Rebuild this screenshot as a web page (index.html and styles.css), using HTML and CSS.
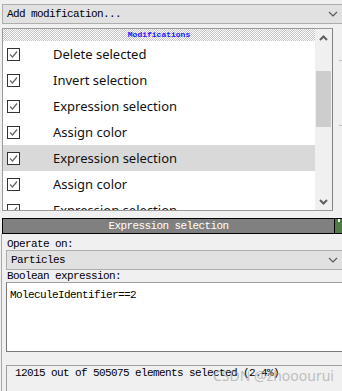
FILE: index.html
```html
<!DOCTYPE html>
<html lang="en">
<head>
    <meta charset="UTF-8">
    <title>Modifications</title>
    <link rel="stylesheet" href="styles.css">
</head>
<body>
    <div class="combo top-combo">
        <span>Add modification...</span>
        <svg class="chev" width="10" height="6" viewBox="0 0 10 6"><polyline points="1,1 5,5 9,1" fill="none" stroke="#555" stroke-width="1.1"/></svg>
    </div>
    <div class="upper">
        <div class="list-panel">
            <div class="rows">
                <div class="list-head"><span>Modifications</span></div>
                <div class="row"><span class="check"><svg width="11" height="11" viewBox="0 0 11 11"><polyline points="2,5.5 4.5,8 9,2.5" fill="none" stroke="#666" stroke-width="1.2"/></svg></span><span class="label">Delete selected</span></div>
                <div class="row"><span class="check"><svg width="11" height="11" viewBox="0 0 11 11"><polyline points="2,5.5 4.5,8 9,2.5" fill="none" stroke="#666" stroke-width="1.2"/></svg></span><span class="label">Invert selection</span></div>
                <div class="row"><span class="check"><svg width="11" height="11" viewBox="0 0 11 11"><polyline points="2,5.5 4.5,8 9,2.5" fill="none" stroke="#666" stroke-width="1.2"/></svg></span><span class="label">Expression selection</span></div>
                <div class="row"><span class="check"><svg width="11" height="11" viewBox="0 0 11 11"><polyline points="2,5.5 4.5,8 9,2.5" fill="none" stroke="#666" stroke-width="1.2"/></svg></span><span class="label">Assign color</span></div>
                <div class="row selected"><span class="check"><svg width="11" height="11" viewBox="0 0 11 11"><polyline points="2,5.5 4.5,8 9,2.5" fill="none" stroke="#666" stroke-width="1.2"/></svg></span><span class="label">Expression selection</span></div>
                <div class="row"><span class="check"><svg width="11" height="11" viewBox="0 0 11 11"><polyline points="2,5.5 4.5,8 9,2.5" fill="none" stroke="#666" stroke-width="1.2"/></svg></span><span class="label">Assign color</span></div>
                <div class="row"><span class="check"><svg width="11" height="11" viewBox="0 0 11 11"><polyline points="2,5.5 4.5,8 9,2.5" fill="none" stroke="#666" stroke-width="1.2"/></svg></span><span class="label">Expression selection</span></div>
            </div>
            <div class="scrollbar">
                <div class="sb-btn"><svg width="9" height="6" viewBox="0 0 9 6"><polyline points="1,5 4.5,1.5 8,5" fill="none" stroke="#606060" stroke-width="2"/></svg></div>
                <div class="thumb"></div>
                <div class="sb-btn sb-down"><svg width="9" height="6" viewBox="0 0 9 6"><polyline points="1,1 4.5,4.5 8,1" fill="none" stroke="#606060" stroke-width="2"/></svg></div>
            </div>
        </div>
        <div class="side-strip"><i></i><i class="second"></i></div>
    </div>

    <div class="title-row">
        <div class="title-bar">Expression selection</div>
        <div class="pin"><i></i></div>
    </div>
    <div class="editor-body">
        <div class="field-label">Operate on:</div>
        <div class="combo">
            <span>Particles</span>
            <svg class="chev" width="10" height="6" viewBox="0 0 10 6"><polyline points="1,1 5,5 9,1" fill="none" stroke="#555" stroke-width="1.1"/></svg>
        </div>
        <div class="field-label">Boolean expression:</div>
        <div class="expr">MoleculeIdentifier==2</div>
        <div class="status">12015 out of 505075 elements selected (2.4%)</div>
    </div>
    <div class="watermark">CSDN @zhooourui</div>
</body>
</html>
```

FILE: styles.css
```css
* {
    margin: 0;
    padding: 0;
    box-sizing: border-box;
}
body {
    width: 342px;
    height: 391px;
    overflow: hidden;
    background: #f0f0f0;
    font-family: 'Liberation Mono', monospace;
    font-size: 11px;
    letter-spacing: -0.6px;
    color: #000;
    position: relative;
}
.combo {
    height: 20px;
    background: #e1e1e1;
    border: 1px solid #adadad;
    border-right: none;
    display: flex;
    align-items: center;
    justify-content: space-between;
    padding: 0 4px 0 4px;
}
.top-combo {
    margin: 4px 0 0 2px;
}
.chev {
    display: block;
}
.upper {
    display: flex;
    margin-top: 4px;
}
.list-panel {
    margin-left: 2px;
    width: 331px;
    height: 183px;
    border: 1px solid #9a9a9a;
    border-right-color: #828282;
    background: #fff;
    display: flex;
    overflow: hidden;
}
.rows {
    flex: 1;
    overflow: hidden;
}
.list-head {
    height: 12px;
    background-color: #fff;
    background-image: repeating-conic-gradient(#c4c4c4 0 25%, #fff 0 50%);
    background-size: 2px 2px;
    text-align: center;
    font-size: 8px;
    line-height: 12px;
    font-weight: bold;
    letter-spacing: 0;
    color: #1a1aff;
}
.row {
    height: 26px;
    display: flex;
    align-items: center;
    padding-left: 4px;
}
.row.selected {
    background: #d9d9d9;
}
.check {
    width: 13px;
    height: 13px;
    border: 1px solid #333;
    background: #fff;
    display: flex;
    align-items: center;
    justify-content: center;
}
.label {
    margin-left: 33px;
    font-family: 'Noto Sans', sans-serif;
    font-size: 13px;
    letter-spacing: 0;
    color: #111;
}
.scrollbar {
    width: 17px;
    background: #f0f0f0;
    display: flex;
    flex-direction: column;
}
.sb-btn {
    height: 17px;
    display: flex;
    align-items: center;
    justify-content: center;
}
.sb-down {
    margin-top: auto;
}
.thumb {
    margin: 25px 1px 0 1px;
    height: 56px;
    background: #cdcdcd;
}
.side-strip {
    flex: 1;
    display: flex;
    flex-direction: column;
    align-items: flex-end;
}
.side-strip i {
    display: block;
    width: 3px;
    height: 1px;
    margin-top: 32px;
    background: #c0c0c0;
}
.side-strip i.second {
    margin-top: 64px;
}
.title-row {
    display: flex;
    margin-top: 7px;
    margin-left: 2px;
    height: 16px;
}
.title-bar {
    width: 333px;
    background: #808080;
    border: 1px solid #000;
    color: #fff;
    text-align: center;
    line-height: 14px;
    font-size: 11px;
}
.pin {
    flex: 1;
    background: #4e7d44;
    border-top: 1px solid #000;
    border-bottom: 1px solid #000;
    display: flex;
    justify-content: center;
}
.pin i {
    display: block;
    width: 2px;
    height: 3px;
    background: #fff;
}
.editor-body {
    margin-left: 1px;
    border-left: 1px solid #a8a8a8;
    padding: 4px 0 0 4px;
    height: 157px;
    overflow: hidden;
}
.field-label {
    height: 12px;
    line-height: 12px;
    padding-left: 1px;
}
.expr {
    height: 70px;
    background: #fff;
    border: 1px solid #7a7a7a;
    border-top-color: #a0a0a0;
    border-right: none;
    padding: 6px 0 0 3px;
    line-height: 12px;
}
.status {
    margin-top: 13px;
    height: 26px;
    border-top: 1px solid #a0a0a0;
    border-left: 1px solid #a0a0a0;
    padding: 1px 0 0 8px;
    line-height: 12px;
}
.watermark {
    position: absolute;
    left: 213px;
    top: 366px;
    white-space: nowrap;
    font-family: 'Noto Sans', sans-serif;
    font-size: 14px;
    letter-spacing: 0;
    color: rgba(160, 160, 160, 0.65);
}
```
